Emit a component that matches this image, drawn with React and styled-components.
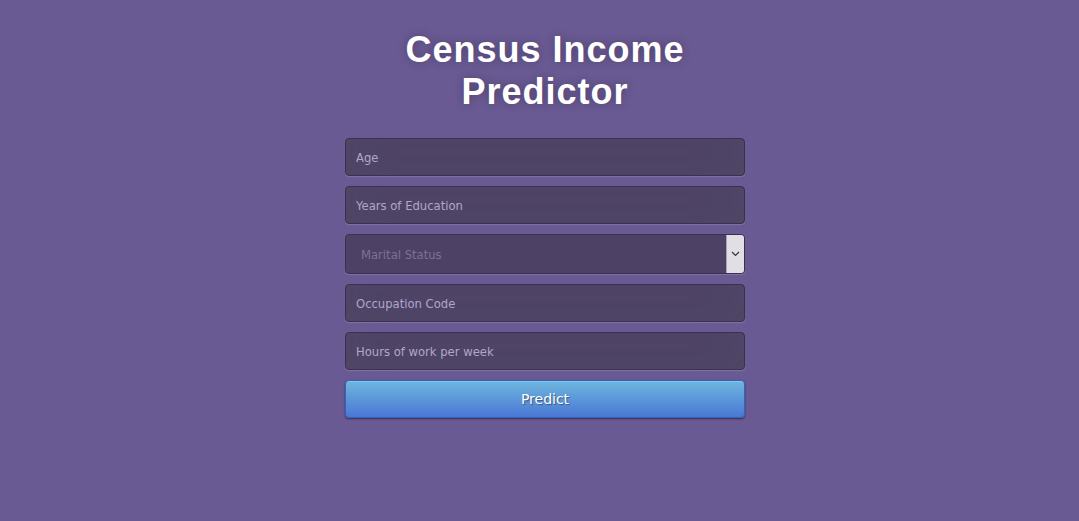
import styled, { createGlobalStyle } from 'styled-components';

const GlobalStyle = createGlobalStyle`
  html, body {
    margin: 0;
    padding: 0;
    height: 100%;
  }
  body {
    background: #6a5a94;
    font-family: "DejaVu Sans", Verdana, sans-serif;
  }
`;

const Page = styled.div`
  min-height: 521px;
  display: flex;
  justify-content: center;
  padding: 29px 0 0 11px;
  box-sizing: border-box;
`;

const Login = styled.div`
  width: 400px;
  display: flex;
  flex-direction: column;
`;

const Title = styled.h1`
  margin: 0 0 25px;
  color: #fff;
  font-family: "Liberation Sans", Arial, sans-serif;
  font-size: 36px;
  line-height: 42px;
  font-weight: 700;
  letter-spacing: 1px;
  text-align: center;
  text-shadow: 0 0 10px rgba(0, 0, 0, 0.3);
`;

const Form = styled.form`
  display: flex;
  flex-direction: column;
  gap: 10px;
`;

const Input = styled.input`
  box-sizing: border-box;
  width: 100%;
  height: 38px;
  margin: 0;
  padding: 1px 10px 0;
  background: #4d4266;
  border: 1px solid #3a3050;
  border-radius: 4px;
  outline: none;
  color: #fff;
  font-family: "DejaVu Sans", Verdana, sans-serif;
  font-size: 11.6px;
  box-shadow: inset 0 -5px 45px rgba(100, 100, 100, 0.15), 0 1px 1px rgba(255, 255, 255, 0.15);

  &::placeholder {
    color: #b3a6cc;
    opacity: 1;
  }
`;

const SelectBox = styled.div`
  display: flex;
  height: 40px;
  box-sizing: border-box;
  background: #4d4266;
  border: 1px solid #3a3050;
  border-radius: 4px;
  overflow: hidden;
  box-shadow: 0 1px 1px rgba(255, 255, 255, 0.15);
`;

const Select = styled.select`
  flex: 1;
  appearance: none;
  background: transparent;
  border: none;
  outline: none;
  margin: 0;
  padding: 1px 15px 0;
  color: #7f7094;
  font-family: "DejaVu Sans", Verdana, sans-serif;
  font-size: 11.6px;
`;

const Arrow = styled.span`
  width: 17px;
  background: #e1dfe4;
  border-left: 1px solid #a9a4b2;
  display: flex;
  align-items: center;
  justify-content: center;
`;

const Button = styled.button`
  height: 38px;
  margin: 0;
  border: 1px solid #3762bc;
  border-radius: 4px;
  background: linear-gradient(to bottom, #6eb6de, #4a77d4);
  color: #fff;
  font-family: "DejaVu Sans", Verdana, sans-serif;
  font-size: 14px;
  padding-top: 1px;
  text-shadow: 1px 1px 1px rgba(0, 0, 0, 0.4);
  box-shadow: inset 0 1px 0 rgba(255, 255, 255, 0.2), 0 1px 2px rgba(0, 0, 0, 0.5);
  cursor: pointer;
`;

export default function App() {
  return (
    <Page>
      <GlobalStyle />
      <Login>
        <Title>
          Census Income
          <br />
          Predictor
        </Title>
        <Form onSubmit={(e) => e.preventDefault()}>
          <Input type="text" placeholder="Age" />
          <Input type="text" placeholder="Years of Education" />
          <SelectBox>
            <Select defaultValue="">
              <option value="" disabled>
                Marital Status
              </option>
              <option value="married">Married</option>
              <option value="single">Single</option>
            </Select>
            <Arrow>
              <svg width="9" height="6" viewBox="0 0 9 6">
                <path d="M1 1l3.5 3.5L8 1" fill="none" stroke="#3a3346" strokeWidth="1.2" />
              </svg>
            </Arrow>
          </SelectBox>
          <Input type="text" placeholder="Occupation Code" />
          <Input type="text" placeholder="Hours of work per week" />
          <Button type="submit">Predict</Button>
        </Form>
      </Login>
    </Page>
  );
}
